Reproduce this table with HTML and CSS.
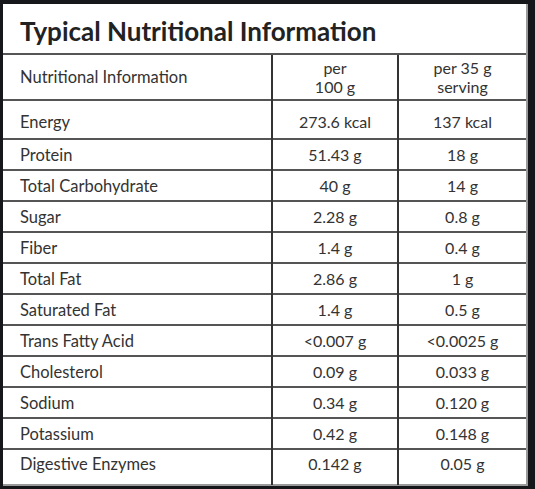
FILE: index.html
```html
<!DOCTYPE html>
<html lang="en">
<head>
  <meta charset="UTF-8">
  <title>Typical Nutritional Information</title>
  <link rel="stylesheet" href="styles.css">
</head>
<body>

<div class="panel">
  <h1>Typical Nutritional Information</h1>
  <table class="facts">
    <thead>
      <tr>
        <th class="name">Nutritional Information</th>
        <th>per<br>100 g</th>
        <th>per 35 g<br>serving</th>
      </tr>
    </thead>
    <tbody>
      <tr class="r-energy"><td class="name">Energy</td><td>273.6 kcal</td><td>137 kcal</td></tr>
      <tr><td class="name">Protein</td><td>51.43 g</td><td>18 g</td></tr>
      <tr><td class="name">Total Carbohydrate</td><td>40 g</td><td>14 g</td></tr>
      <tr><td class="name">Sugar</td><td>2.28 g</td><td>0.8 g</td></tr>
      <tr><td class="name">Fiber</td><td>1.4 g</td><td>0.4 g</td></tr>
      <tr><td class="name">Total Fat</td><td>2.86 g</td><td>1 g</td></tr>
      <tr><td class="name">Saturated Fat</td><td>1.4 g</td><td>0.5 g</td></tr>
      <tr><td class="name">Trans Fatty Acid</td><td>&lt;0.007 g</td><td>&lt;0.0025 g</td></tr>
      <tr><td class="name">Cholesterol</td><td>0.09 g</td><td>0.033 g</td></tr>
      <tr><td class="name">Sodium</td><td>0.34 g</td><td>0.120 g</td></tr>
      <tr><td class="name">Potassium</td><td>0.42 g</td><td>0.148 g</td></tr>
      <tr class="r-last"><td class="name">Digestive Enzymes</td><td>0.142 g</td><td>0.05 g</td></tr>
    </tbody>
  </table>
</div>

</body>
</html>
```

FILE: styles.css
```css
* {margin:0;padding:0;box-sizing:border-box}
body {
  background: #15171b;
  font-family: 'Lato', 'Liberation Sans', sans-serif;
  color: #333;
  padding: 4px 7px 3px 3px;
}
.panel {
  background: #fff;
  border-right: 2px solid #9a9a9a;
  border-bottom: 2px solid #9a9a9a;
  height: 482px;
}
.panel h1 {
  font-size: 26px;
  font-weight: 700;
  color: #222;
  height: 49px;
  padding: 13px 0 0 17px;
  line-height: 28px;
}
.facts {
  width: 100%;
  border-collapse: collapse;
  font-size: 16px;
}
.facts th, .facts td {
  font-weight: 400;
  text-align: center;
  height: 31px;
  border-top: 2px solid #555;
  border-left: 2px solid #333;
  line-height: 18px;
}
.facts th {
  height: 46px;
  line-height: 19px;
}
.facts .name {
  text-align: left;
  padding-left: 17px;
  border-left: none;
  width: 269px;
  font-size: 16.5px;
}
.facts th:nth-child(2), .facts td:nth-child(2) {width:126px;}
.r-energy td {height: 39px; padding-top: 4px;}
.r-last td {height: 36px; padding-bottom: 8px;}
```
